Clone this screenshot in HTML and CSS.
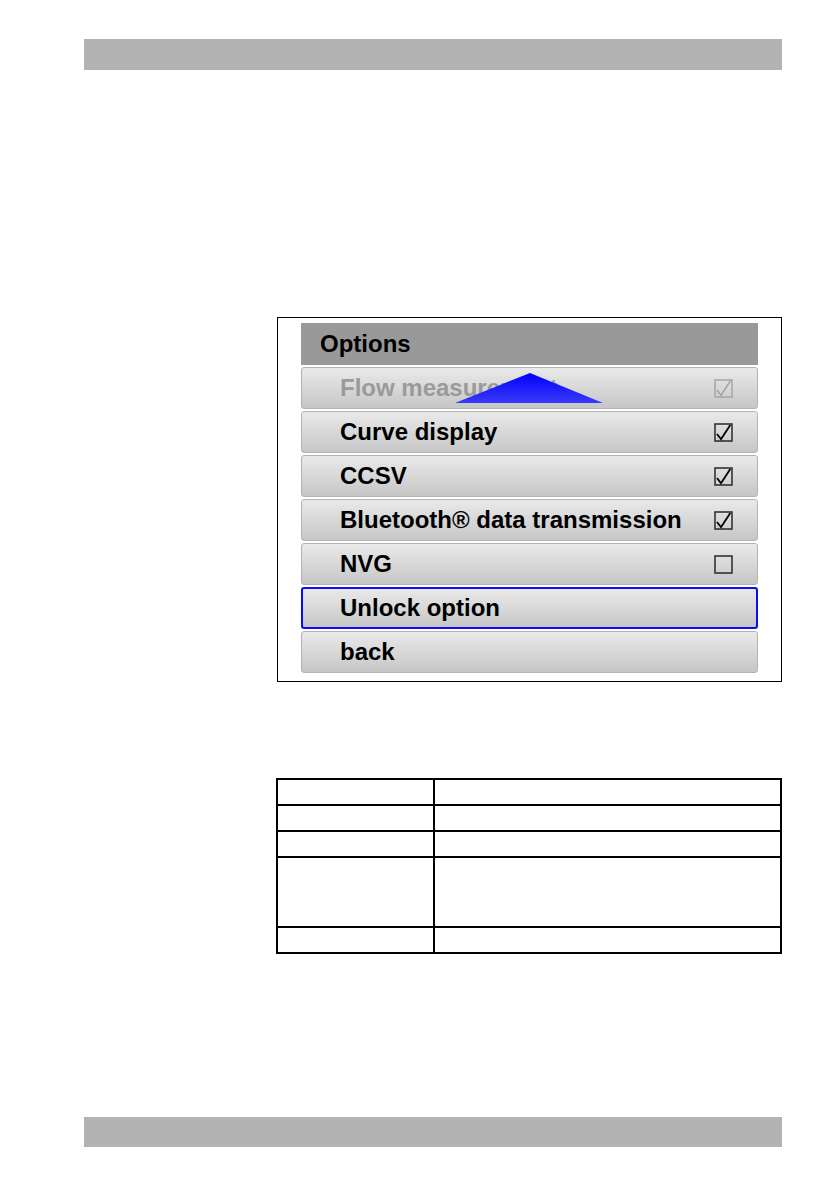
FILE: index.html
```html
<!DOCTYPE html>
<html>
<head>
  <meta charset='utf-8'>
  <title>Options</title>
  <meta name='viewport' content='width=device-width, initial-scale=1'>
  <link rel="stylesheet" href="styles.css">
</head>
<body>

  <div class="bar top-bar"></div>

  <section class="screen">
    <div class="screen-title">Options</div>
    <div class="menu-row disabled">
      <span>Flow measurement</span>
      <svg class="check" viewBox="0 0 19 19"><rect x="1" y="1" width="17" height="17" /><path d="M3 11 L7 16.3 L16.3 2" /></svg>
      <svg class="arrow" viewBox="0 0 148 30">
        <defs>
          <linearGradient id="blue" x1="0" y1="0" x2="0" y2="1">
            <stop offset="0" stop-color="#0000ff" />
            <stop offset="1" stop-color="#3a3af5" />
          </linearGradient>
        </defs>
        <polygon points="75,0 148,30 0,30" fill="url(#blue)" />
      </svg>
    </div>
    <div class="menu-row">
      <span>Curve display</span>
      <svg class="check" viewBox="0 0 19 19"><rect x="1" y="1" width="17" height="17" /><path d="M3 11 L7 16.3 L16.3 2" /></svg>
    </div>
    <div class="menu-row">
      <span>CCSV</span>
      <svg class="check" viewBox="0 0 19 19"><rect x="1" y="1" width="17" height="17" /><path d="M3 11 L7 16.3 L16.3 2" /></svg>
    </div>
    <div class="menu-row">
      <span>Bluetooth® data transmission</span>
      <svg class="check" viewBox="0 0 19 19"><rect x="1" y="1" width="17" height="17" /><path d="M3 11 L7 16.3 L16.3 2" /></svg>
    </div>
    <div class="menu-row">
      <span>NVG</span>
      <svg class="check" viewBox="0 0 19 19"><rect x="1" y="1" width="17" height="17" /></svg>
    </div>
    <div class="menu-row selected">
      <span>Unlock option</span>
    </div>
    <div class="menu-row">
      <span>back</span>
    </div>
  </section>

  <table class="info">
    <tr><td></td><td></td></tr>
    <tr><td></td><td></td></tr>
    <tr><td></td><td></td></tr>
    <tr class="tall"><td></td><td></td></tr>
    <tr><td></td><td></td></tr>
  </table>

  <div class="bar bottom-bar"></div>

</body>
</html>
```

FILE: styles.css
```css
body {
  margin: 0;
  padding-top: 39px;
  background: #fff;
  font-family: "Liberation Sans", Arial, sans-serif;
}
.bar {
  width: 698px;
  height: 31px;
  margin-left: 84px;
  background: #b3b3b3;
}
.bottom-bar {
  height: 30px;
  margin-top: 163px;
}

.screen {
  box-sizing: border-box;
  width: 505px;
  margin: 247px 0 0 277px;
  padding: 5px 23px 8px 23px;
  border: 1px solid #000;
  display: flex;
  flex-direction: column;
  gap: 2px;
}
.screen-title {
  height: 42px;
  padding-left: 19px;
  background: #999;
  display: flex;
  align-items: center;
  font-size: 24px;
  font-weight: bold;
  color: #000;
}
.menu-row {
  position: relative;
  box-sizing: border-box;
  height: 42px;
  padding: 0 24px 0 38px;
  display: flex;
  align-items: center;
  justify-content: space-between;
  border: 1px solid #b4b4b4;
  border-radius: 3px;
  background: linear-gradient(#e9e9e9, #dadada 45%, #c6c6c6);
  font-size: 24px;
  font-weight: bold;
  color: #000;
}
.menu-row.disabled {
  color: #9a9a9a;
}
.menu-row.selected {
  border: 2px solid #0a0aff;
  padding-left: 37px;
}
.check {
  width: 19px;
  height: 19px;
  fill: none;
}
.check rect {
  stroke: #333;
  stroke-width: 1.6;
}
.check path {
  stroke: #000;
  stroke-width: 1.8;
}
.disabled .check rect {
  stroke: #a8a8a8;
}
.disabled .check path {
  stroke: #a0a0a0;
  stroke-width: 1.4;
}
.arrow {
  position: absolute;
  left: 153px;
  top: 5px;
  width: 148px;
  height: 30px;
}

.info {
  width: 506px;
  margin: 96px 0 0 276px;
  border-collapse: collapse;
}
.info td {
  height: 24px;
  padding: 0;
  border: 2px solid #000;
}
.info td:first-child {
  width: 155px;
}
.info tr.tall td {
  height: 68px;
}
```
